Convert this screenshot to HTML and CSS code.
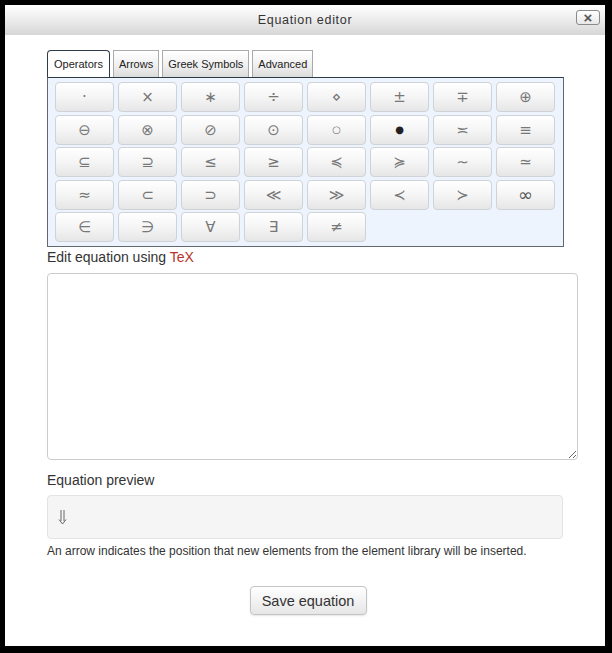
FILE: index.html
```html
<!DOCTYPE html>
<html lang="en">
  <head>
    <meta charset="UTF-8" />
    <title>Equation editor</title>
    <link rel="stylesheet" href="styles.css">
  </head>
  <body>
    <div class="dialog">
      <div class="dialogHeader">
        <span class="dialogTitle">Equation editor</span>
        <button class="closeBtn">&times;</button>
      </div>
      <div class="dialogBody">
        <ul class="tabs">
          <li class="tab active">Operators</li>
          <li class="tab">Arrows</li>
          <li class="tab">Greek Symbols</li>
          <li class="tab">Advanced</li>
        </ul>
        <div class="symbolPanel">
          <!-- row 1 -->
          <button class="sym">&middot;</button>
          <button class="sym">&times;</button>
          <button class="sym">&lowast;</button>
          <button class="sym">&divide;</button>
          <button class="sym">&#8900;</button>
          <button class="sym">&plusmn;</button>
          <button class="sym">&#8723;</button>
          <button class="sym">&oplus;</button>
          <!-- row 2 -->
          <button class="sym">&#8854;</button>
          <button class="sym">&otimes;</button>
          <button class="sym">&#8856;</button>
          <button class="sym">&#8857;</button>
          <button class="sym small">&#9675;</button>
          <button class="sym small dark">&#9679;</button>
          <button class="sym">&#8781;</button>
          <button class="sym">&equiv;</button>
          <!-- row 3 -->
          <button class="sym">&sube;</button>
          <button class="sym">&supe;</button>
          <button class="sym">&le;</button>
          <button class="sym">&ge;</button>
          <button class="sym">&#8828;</button>
          <button class="sym">&#8829;</button>
          <button class="sym">&sim;</button>
          <button class="sym">&#8771;</button>
          <!-- row 4 -->
          <button class="sym">&asymp;</button>
          <button class="sym">&sub;</button>
          <button class="sym">&sup;</button>
          <button class="sym">&#8810;</button>
          <button class="sym">&#8811;</button>
          <button class="sym">&#8826;</button>
          <button class="sym">&#8827;</button>
          <button class="sym big">&infin;</button>
          <!-- row 5 -->
          <button class="sym">&isin;</button>
          <button class="sym">&ni;</button>
          <button class="sym">&forall;</button>
          <button class="sym">&exist;</button>
          <button class="sym">&ne;</button>
        </div>

        <label class="fieldLabel">Edit equation using <span class="tex">TeX</span></label>
        <textarea class="texInput"></textarea>

        <div class="fieldLabel previewLabel">Equation preview</div>
        <div class="preview">
          <svg class="cursorArrow" width="9" height="15" viewBox="0 0 9 15">
            <path d="M3 0 V11 M6 0 V11 M1 9.5 L4.5 14 L8 9.5" fill="none" stroke="#666" stroke-width="1"/>
          </svg>
        </div>
        <p class="helpText">An arrow indicates the position that new elements from the element library will be inserted.</p>

        <div class="actions">
          <button class="saveBtn">Save equation</button>
        </div>
      </div>
    </div>
  </body>
</html>
```

FILE: styles.css
```css
body {
  margin: 0;
  padding: 5px 0 0 5px;
  background: #000;
  font-family: "Liberation Sans", Arial, sans-serif;
  height: 653px;
  box-sizing: border-box;
  overflow: hidden;
}

.dialog {
  width: 600px;
  height: 641px;
  background: #fff;
  display: flex;
  flex-direction: column;
}

.dialogHeader {
  position: relative;
  height: 30px;
  display: flex;
  align-items: center;
  justify-content: center;
  background: linear-gradient(#ffffff 0%, #f0f0f0 40%, #d6d6d6 100%);
}
.dialogTitle {
  font-size: 12.5px;
  letter-spacing: 0.7px;
  color: #333;
}
.closeBtn {
  position: absolute;
  right: 5px;
  top: 5px;
  width: 24px;
  height: 15px;
  padding: 0;
  line-height: 11px;
  font-size: 15px;
  font-weight: bold;
  color: #555;
  background: linear-gradient(#fff, #e8e8e8);
  border: 1px solid #8a8a8a;
  border-radius: 3px;
  font-family: "Liberation Sans", Arial, sans-serif;
}

.dialogBody {
  padding: 15px 0 0 42px;
  display: flex;
  flex-direction: column;
  align-items: flex-start;
}

.tabs {
  list-style-type: none;
  margin: 0;
  padding: 0;
  display: flex;
  gap: 3px;
  height: 27px;
}
.tab {
  font-size: 11px;
  color: #222;
  padding: 0 5px;
  line-height: 26px;
  border: 1px solid #aaa;
  border-bottom: none;
  background: linear-gradient(#ffffff 0%, #f0f0f0 55%, #dcdcdc 100%);
}
.tab.active {
  padding: 0 6px;
  background: #fff;
  border-color: #2e3a46;
  border-radius: 4px 4px 0 0;
}

.symbolPanel {
  width: 501px;
  height: 164px;
  padding: 4px 7px 0 7px;
  border: 1px solid #606870;
  border-top-color: #2e3a46;
  background: #eef4fd;
  display: grid;
  grid-template-columns: repeat(8, 59px);
  grid-auto-rows: 30px;
  column-gap: 4px;
  row-gap: 2.5px;
}
.sym {
  margin: 0;
  padding: 0;
  font-family: "DejaVu Sans", sans-serif;
  font-size: 15px;
  color: #777;
  background: linear-gradient(#ffffff 0%, #f5f5f5 50%, #e6e6e6 100%);
  border: 1px solid #cfd3d8;
  border-radius: 4px;
}
.sym.small {
  font-size: 10px;
}
.sym.dark {
  color: #222;
}
.sym.big {
  font-size: 18px;
  color: #555;
}

.fieldLabel {
  font-size: 14px;
  line-height: 20px;
  color: #333;
}
.tex {
  color: #b8312a;
}

.texInput {
  margin-top: 6px;
  width: 531px;
  height: 187px;
  box-sizing: border-box;
  border: 1px solid #ccc;
  border-radius: 4px;
  resize: vertical;
}

.previewLabel {
  margin-top: 10px;
}

.preview {
  margin-top: 5px;
  width: 516px;
  height: 44px;
  box-sizing: border-box;
  background: #f5f5f5;
  border: 1px solid #e3e3e3;
  border-radius: 4px;
  display: flex;
  align-items: center;
  padding-left: 10px;
}

.helpText {
  margin: 4px 0 0 0;
  font-size: 12px;
  line-height: 17px;
  color: #333;
}

.actions {
  width: 522px;
  display: flex;
  justify-content: center;
  margin-top: 26px;
}
.saveBtn {
  width: 117px;
  height: 29px;
  font-family: "Liberation Sans", Arial, sans-serif;
  font-size: 14.5px;
  color: #333;
  background: linear-gradient(#ffffff, #e6e6e6);
  border: 1px solid #c4c4c4;
  border-radius: 4px;
  box-shadow: 0 1px 2px rgba(0, 0, 0, 0.1);
}
```
